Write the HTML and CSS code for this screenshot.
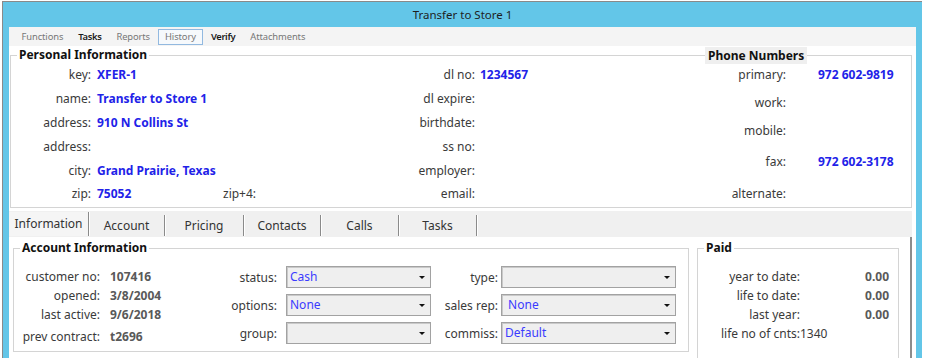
FILE: index.html
```html
<!DOCTYPE html>
<html lang="en">
<head>
  <meta charset="UTF-8">
  <title>Transfer to Store 1</title>
  <link rel="stylesheet" href="styles.css">
</head>
<body>

  <div class="window">
    <div class="titlebar">Transfer to Store 1</div>

    <div class="client">
      <nav class="menubar">
        <span class="menu dim">Functions</span>
        <span class="menu">Tasks</span>
        <span class="menu dim">Reports</span>
        <span class="menu dim active">History</span>
        <span class="menu">Verify</span>
        <span class="menu dim">Attachments</span>
      </nav>

      <fieldset class="group personal">
        <legend>Personal Information</legend>
        <div class="pgrid">
          <span class="lbl">key:</span><span class="val">XFER-1</span><span></span>
          <span class="lbl">dl no:</span><span class="val">1234567</span>

          <span class="lbl">name:</span><span class="val">Transfer to Store 1</span><span></span>
          <span class="lbl">dl expire:</span><span></span>

          <span class="lbl">address:</span><span class="val">910 N Collins St</span><span></span>
          <span class="lbl">birthdate:</span><span></span>

          <span class="lbl">address:</span><span></span><span></span>
          <span class="lbl">ss no:</span><span></span>

          <span class="lbl">city:</span><span class="val">Grand Prairie, Texas</span><span></span>
          <span class="lbl">employer:</span><span></span>

          <span class="lbl">zip:</span><span class="val">75052</span><span class="plain">zip+4:</span>
          <span class="lbl">email:</span><span></span>
        </div>

        <div class="phones">
          <div class="phone-title">Phone Numbers</div>
          <span class="lbl">primary:</span><span class="val">972 602-9819</span>
          <span class="lbl">work:</span><span></span>
          <span class="lbl">mobile:</span><span></span>
          <span class="lbl">fax:</span><span class="val">972 602-3178</span>
          <span class="lbl">alternate:</span><span></span>
        </div>
      </fieldset>

      <div class="tabs">
        <span class="tab selected">Information</span>
        <span class="tab">Account</span>
        <span class="tab">Pricing</span>
        <span class="tab">Contacts</span>
        <span class="tab">Calls</span>
        <span class="tab">Tasks</span>
      </div>

      <div class="tabpanel">
        <fieldset class="group account">
          <legend>Account Information</legend>

          <div class="acct-info">
            <span class="lbl">customer no:</span><span class="num">107416</span>
            <span class="lbl">opened:</span><span class="num">3/8/2004</span>
            <span class="lbl">last active:</span><span class="num">9/6/2018</span>
            <span class="lbl">prev contract:</span><span class="num">t2696</span>
          </div>

          <div class="combos mid">
            <span class="lbl">status:</span><div class="combo">Cash</div>
            <span class="lbl">options:</span><div class="combo">None</div>
            <span class="lbl">group:</span><div class="combo"></div>
          </div>

          <div class="combos right">
            <span class="lbl">type:</span><div class="combo"></div>
            <span class="lbl">sales rep:</span><div class="combo">&nbsp;None</div>
            <span class="lbl">commiss:</span><div class="combo">Default</div>
          </div>
        </fieldset>

        <fieldset class="group paid">
          <legend>Paid</legend>
          <div class="paid-grid">
            <span class="lbl">year to date:</span><span class="num">0.00</span>
            <span class="lbl">life to date:</span><span class="num">0.00</span>
            <span class="lbl">last year:</span><span class="num">0.00</span>
            <span class="count">life no of cnts:1340</span>
          </div>
        </fieldset>
      </div>
    </div>
  </div>

</body>
</html>
```

FILE: styles.css
```css
* { box-sizing: border-box; }
html, body { height: 358px; }
body { margin: 0; background: #fff; font-family: "Noto Sans", "Open Sans", sans-serif; font-size: 12px; color: #3a3a3a; overflow: hidden; }

.window { margin: 1px 0 0 2px; width: 920px; height: 357px; background: #63c6e8; border-top: 1px solid #8a8a8a; border-left: 1px solid #8a8a8a; padding: 0 6px; }
.titlebar { height: 25px; line-height: 25px; text-align: center; font-size: 11.5px; color: #1e1e1e; }
.client { background: #fff; height: 332px; overflow: hidden; }

/* menu bar */
.menubar { display: flex; align-items: center; height: 19px; padding-left: 5px; background: #f4f4f4; font-size: 9.4px; }
.menu { height: 16px; line-height: 14px; padding: 0 6.5px; border: 1px solid transparent; color: #1a1a1a; font-weight: 600; letter-spacing: -0.35px; }
.menu.dim { color: #777; font-weight: 400; letter-spacing: -0.1px; }
.menu.active { border-color: #92b9e0; background: #f6f9fc; }

/* group boxes */
.group { border: 1px solid #d4d4d4; padding: 0; min-width: 0; }
.group legend { margin-left: 6px; padding: 0 2px; line-height: 16px; font-weight: bold; color: #111; }

.personal { display: flex; margin: 1px 4px 0 1px; padding-bottom: 2px; }
.lbl { text-align: right; white-space: nowrap; }
.val { color: #2222e8; font-weight: bold; white-space: nowrap; }
.plain { white-space: nowrap; }

.pgrid { display: grid; width: 689px; grid-template-columns: 86px 126px 100px 157px 220px; grid-template-rows: 23px 25px 23px 24px 24px 23px; align-items: center; }
.pgrid .lbl { padding-right: 6px; }
.pgrid .lbl:nth-child(5n+4) { padding-right: 5px; }

.phones { position: relative; display: grid; flex: 1; grid-template-columns: 118px 1fr; grid-template-rows: 22px 34px 22px 40px 24px; align-items: center; }
.phones .lbl { padding-right: 32px; }
.phone-title { position: absolute; left: 5px; top: -16px; padding: 0 3px; line-height: 17px; background: #efefef; font-weight: bold; color: #111; }

/* tabs */
.tabs { display: flex; align-items: flex-end; height: 26px; margin: 3px 4px 0 0; background: #f0f0f0; }
.tab { height: 21px; margin-bottom: 1px; line-height: 21px; text-align: center; border-right: 1px solid #8a8a8a; box-shadow: 1px 0 0 #fff; color: #333; }
.tab.selected { height: 24px; line-height: 23px; background: #f5f5f5; }
.tab:nth-child(1) { width: 80px; }
.tab:nth-child(2) { width: 76px; }
.tab:nth-child(3) { width: 79px; }
.tab:nth-child(4) { width: 77px; }
.tab:nth-child(5) { width: 78px; }
.tab:nth-child(6) { width: 78px; }

.tabpanel { display: flex; align-items: flex-start; width: 903px; height: 140px; padding-top: 3px; border-right: 2px solid #8c8c8c; }

.account { display: flex; width: 676px; margin: 0 0 0 4px; padding-bottom: 3px; }
.num { font-weight: bold; color: #595959; white-space: nowrap; }

.acct-info { display: grid; width: 186px; padding-top: 10px; grid-template-columns: 86px 1fr; grid-template-rows: 20px 18px 20px 24px; align-items: center; }
.acct-info .num { padding-left: 10px; }

.combos { display: grid; padding-top: 10px; grid-template-rows: 22px 22px 22px; row-gap: 6px; align-items: center; }
.combos.mid { width: 231px; grid-template-columns: 77px 145px; column-gap: 9px; }
.combos.right { width: 245px; grid-template-columns: 67px 175px; column-gap: 3px; }

.combo { position: relative; height: 22px; line-height: 20px; padding-left: 3px; background: #efefef; border: 1px solid #a2a2a2; box-shadow: inset 1px 1px 0 #c9c9c9; color: #3b3bff; }
.combo::after { content: ""; position: absolute; right: 5px; top: 9px; border-left: 3px solid transparent; border-right: 3px solid transparent; border-top: 3px solid #111; }

.paid { width: 202px; height: 136px; margin-left: 8px; }
.paid-grid { display: grid; padding-top: 10px; grid-template-columns: 102px 89px; grid-template-rows: 20px 18px 20px 18px; align-items: center; }
.paid-grid .num { text-align: right; }
.count { grid-column: 1 / 3; padding-left: 23px; }
```
